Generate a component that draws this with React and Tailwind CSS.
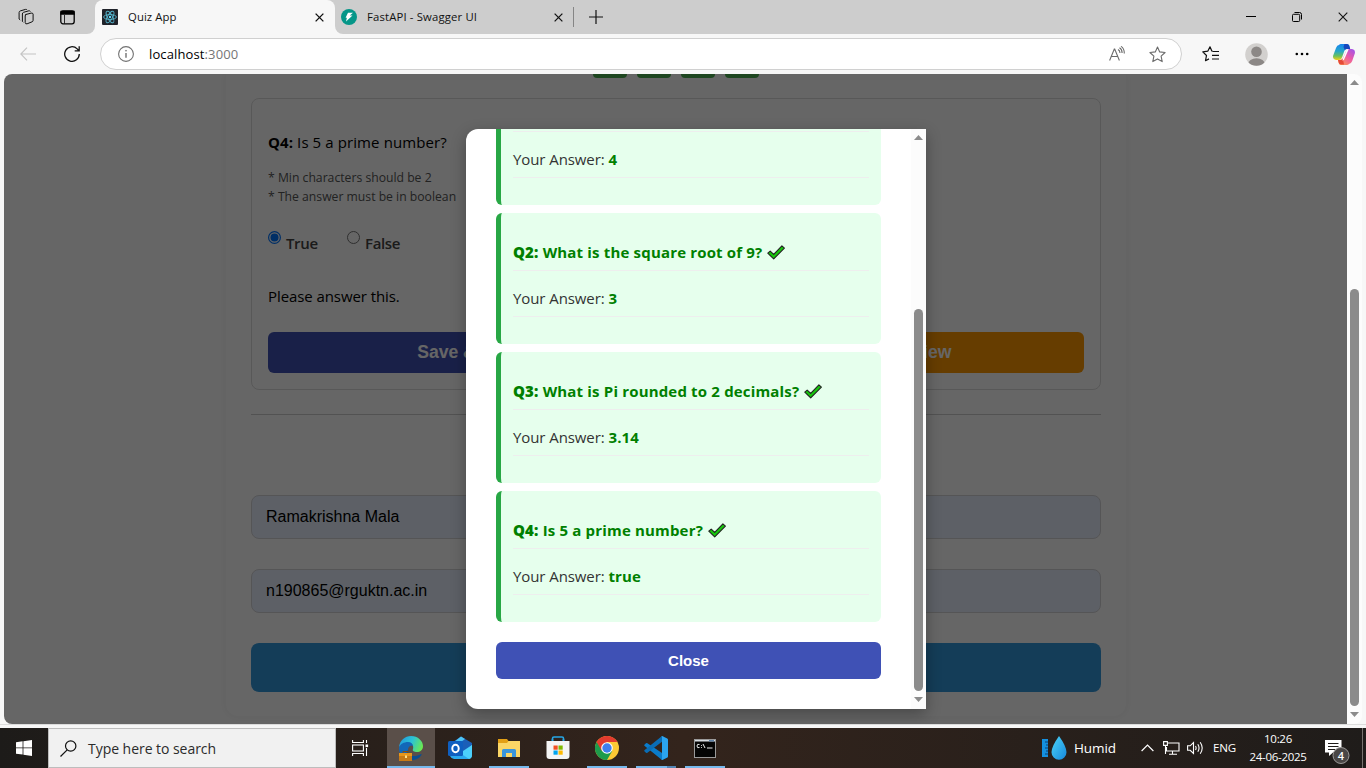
import React from "react";

const UI = "font-['Open_Sans','Noto_Sans',sans-serif]";
const ARIAL = "font-['Liberation_Sans',Arial,sans-serif]";

function CloseX({ size = 10, width = 1.4 }) {
  return (
    <svg width={size} height={size} viewBox="0 0 10 10" stroke="#111" strokeWidth={width} fill="none">
      <path d="M.7.7l8.6 8.6M9.3.7L.7 9.3" />
    </svg>
  );
}

function ReactBadge() {
  return (
    <svg width="16" height="16" viewBox="0 0 16 16">
      <rect width="16" height="16" rx="1" fill="#20232a" />
      <g fill="none" stroke="#55b4cb" strokeWidth=".9">
        <ellipse cx="8" cy="8" rx="6.4" ry="2.5" />
        <ellipse cx="8" cy="8" rx="6.4" ry="2.5" transform="rotate(60 8 8)" />
        <ellipse cx="8" cy="8" rx="6.4" ry="2.5" transform="rotate(120 8 8)" />
      </g>
      <circle cx="8" cy="8" r="1.2" fill="#61dafb" />
    </svg>
  );
}

function TabStrip() {
  return (
    <div className="flex h-[34px] items-stretch bg-[#f7f7f7] text-[11.3px] text-[#111]">
      <div className="flex w-[95px] items-center rounded-br-lg bg-[#cdcdcd] pl-[17px]">
        <svg width="18" height="18" viewBox="0 0 18 18" fill="none" stroke="#111" strokeWidth="1">
          <path d="M8.500 6.600l5.600-1.500q1.700-.4 2 1v6.200q0 1.200-1 1.500l-5 2q-1.700.5-1.900-1.200V8q0-1.100 1-1.500z" />
          <path d="M6.300 14.200l-.9-.8V6q0-1.300 1.200-1.700l5.300-1.500q1-.2 1.500.7M3.200 12l-1.100-1V4.500q0-1.200 1.200-1.600L8.500 1.400q1-.2 1.600.5" />
        </svg>
        <svg className="ml-[25px]" width="15" height="15" viewBox="0 0 15 15" fill="none" stroke="#000" strokeWidth="1.300">
          <rect x=".8" y=".8" width="13.400" height="13" rx="2.200" />
          <path d="M1 1.500h13v2.500H1z" fill="#000" />
          <path d="M4.500 5v8.500" strokeWidth=".8" />
        </svg>
      </div>
      <div className="flex w-[240px] bg-[#cdcdcd]">
        <div className="flex flex-1 items-center rounded-t-lg bg-[#f7f7f7] pl-[7px]">
          <ReactBadge />
          <span className="ml-[10px] flex-1 tracking-[0.1px]">Quiz App</span>
          <span className="mr-[11px]"><CloseX size={9} width={1.5} /></span>
        </div>
      </div>
      <div className="flex flex-1 items-stretch rounded-bl-lg bg-[#cdcdcd]">
        <div className="flex w-[238px] items-center pl-[6px]">
          <svg width="16" height="16" viewBox="0 0 16 16">
            <circle cx="8" cy="8" r="8" fill="#059688" />
            <path d="M7 3.700h5L8.800 6.600h2.700L5 12.400l.9-3.700H4.600z" fill="#fff" />
          </svg>
          <span className="ml-[10px] flex-1 tracking-[0.16px]">FastAPI - Swagger UI</span>
          <span className="mr-[10px]"><CloseX size={9} width={1.4} /></span>
        </div>
        <div className="my-[7px] w-px bg-[#858585]" />
        <div className="flex flex-1 items-center pl-[15px]">
          <svg width="14" height="14" viewBox="0 0 14 14" stroke="#111" strokeWidth="1.200"><path d="M7 0v14M0 7h14" /></svg>
        </div>
        <div className="flex items-center pr-[18px]">
          <svg width="10" height="10" viewBox="0 0 10 10" stroke="#000"><path d="M0 4.500h10" /></svg>
          <svg className="ml-[36px]" width="10" height="10" viewBox="0 0 10 10" fill="none" stroke="#000">
            <rect x=".5" y="2.300" width="7.200" height="7.200" rx="1" />
            <path d="M2.500.5h5q2 0 2 2v5" />
          </svg>
          <span className="ml-[36px]"><CloseX size={10} width={1.1} /></span>
        </div>
      </div>
    </div>
  );
}

function CopilotMark() {
  return (
    <svg width="22" height="21" viewBox="0 0 22 21">
      <defs>
        <linearGradient id="cpA" x1="0" y1="0" x2="0" y2="1"><stop stopColor="#1683ee" /><stop offset=".45" stopColor="#26a7c9" /><stop offset=".75" stopColor="#6ac15c" /><stop offset="1" stopColor="#f5cf19" /></linearGradient>
        <linearGradient id="cpB" x1="1" y1="0" x2=".2" y2="1"><stop stopColor="#9a52f2" /><stop offset=".5" stopColor="#ec5aa5" /><stop offset="1" stopColor="#ff9a55" /></linearGradient>
      </defs>
      <path d="M6 1q.5-1 2-1h6q1.600 0 2.200 1.600L17 5h-3q-2 0-2.700 2L9 13.500Q8.200 16 6 16H3Q-.8 15.500.2 11.500L3 4Q4 1 6 1z" fill="url(#cpA)" />
      <path d="M11.500 0H14q1.600 0 2.200 1.600L17.200 5H14q-1.500 0-2.200 1L10.500 3z" fill="#1647bd" />
      <path d="M16 20q-.7 1-2.200 1H8q-1.600 0-2.200-1.800L5 16h2.500q2 0 2.700-2.200L13 7.200Q13.700 5 16 5h3q3.600.6 2.800 4.500L19.200 17Q18.200 19.700 16 20z" fill="url(#cpB)" />
      <path d="M5 16h2.500q1.600-.2 2.300-1.500L11 20.500H8q-1.600 0-2.200-1.500z" fill="#e54a38" />
      <path d="M13.700 5.300h2L11 15.700q-.5.800-1.700.8z" fill="#fff" />
    </svg>
  );
}

function Toolbar() {
  return (
    <div className="flex h-10 items-center bg-[#f7f7f7]">
      <svg className="ml-5" width="16" height="14" viewBox="0 0 16 14" fill="none" stroke="#c3c3c3" strokeWidth="1.100"><path d="M16 7H.8M7 .7L.8 7 7 13.300" /></svg>
      <svg className="ml-[28px]" width="16" height="16" viewBox="0 0 16 16" fill="none" stroke="#111" strokeWidth="1.300"><path d="M15.300 8A7.300 7.300 0 1 1 13.200 2.900L15 4.700M15.200.3v4.500h-4.500" /></svg>
      <div className="ml-5 flex h-8 w-[1082px] items-center rounded-full border border-[#d0d0d0] bg-white pl-[17px]">
        <svg width="16" height="16" viewBox="0 0 16 16" fill="none" stroke="#717171" strokeWidth="1.100"><circle cx="8" cy="8" r="7.400" /><path d="M8 7v4.700" strokeWidth="1.400" /><circle cx="8" cy="4.700" r=".5" fill="#717171" strokeWidth=".7" /></svg>
        <span className="ml-[15px] flex-1 pt-px text-[13px] tracking-[0.12px] text-black">localhost<span className="text-[#767676]">:3000</span></span>
        <svg width="16" height="16" viewBox="0 0 16 16" fill="none" stroke="#6b6b6b" strokeWidth="1.100"><path d="M.6 14.500L5.300 3h.4l4.700 11.500M2.200 10.500h6.600M9 3.500q2 1 2 3.500M10.500 1.800q2.600 1.500 2.600 5.200M12 .4q3.300 2 3.300 7" /></svg>
        <svg className="ml-[24px] mr-[15px]" width="17" height="17" viewBox="0 0 17 17" fill="none" stroke="#6b6b6b" strokeWidth="1.100" strokeLinejoin="round"><path d="M8.500 1l2.200 4.900 5.400.6-4 3.700 1.100 5.400-4.700-2.700-4.700 2.700 1.100-5.400-4-3.700 5.400-.6z" /></svg>
      </div>
      <svg className="ml-[20px]" width="18" height="16" viewBox="0 0 18 16" fill="none" stroke="#111" strokeWidth="1.200" strokeLinejoin="round"><path d="M10.800 5.300L9.800 5 8 .8 5.900 5.100.8 5.800l3.700 3.700-1 5.200L7 12.900M10.800 5.500H17M10 9.300h7M10 13h7" /></svg>
      <svg className="ml-[25px]" width="23" height="23" viewBox="0 0 23 23"><defs><clipPath id="ava"><circle cx="11.500" cy="11.500" r="11.300" /></clipPath></defs><circle cx="11.500" cy="11.500" r="11.300" fill="#d2d0ce" /><circle cx="11.500" cy="8.700" r="5.300" fill="#8c8886" /><ellipse cx="11.500" cy="21.500" rx="8.500" ry="6.300" fill="#8c8886" clipPath="url(#ava)" /></svg>
      <svg className="ml-[27px]" width="14" height="4" viewBox="0 0 14 4"><circle cx="1.800" cy="2" r="1.300" /><circle cx="7" cy="2" r="1.300" /><circle cx="12.200" cy="2" r="1.300" /></svg>
      <span className="ml-[24px]"><CopilotMark /></span>
    </div>
  );
}

function ScrollBar({ spacer, thumb, className }) {
  return (
    <div className={"flex w-[15px] shrink-0 flex-col items-center bg-[#fcfcfc] " + className}>
      <svg width="9" height="5" viewBox="0 0 9 5"><path d="M4.500 0L9 5H0z" fill="#8b8b8b" /></svg>
      <div className={spacer} />
      <div className={"w-[9px] rounded-full bg-[#8b8b8b] " + thumb} />
      <svg className="mt-[6px]" width="9" height="5" viewBox="0 0 9 5"><path d="M0 0h9L4.500 5z" fill="#8b8b8b" /></svg>
    </div>
  );
}

function QuizPage() {
  return (
    <div className="flex flex-1 justify-center bg-white">
      <div className="ml-px h-[642px] w-[900px] rounded-b-xl bg-white px-[25px] shadow-[0_0_10px_rgba(0,0,0,0.06)]">
        <div className="flex h-1 justify-center gap-[10px]">
          {[1, 2, 3, 4].map((n) => (
            <div key={n} className="h-1 w-[34px] rounded-b-md bg-[#4caf50]" />
          ))}
        </div>
        <div className="mt-5 h-[292px] rounded-lg border border-[#ddd] px-4 pt-[31px]">
          <p className="h-6 text-[15px] leading-6 tracking-[0.1px] text-black"><b>Q4:</b> Is 5 a prime number?</p>
          <div className="mt-[14px] text-[12.200px] leading-[19px] text-[#555]">
            <p>* Min characters should be 2</p>
            <p>* The answer must be in boolean</p>
          </div>
          <div className="mt-[23px] flex h-6 text-[15px] font-semibold leading-6 tracking-[-0.35px] text-[#444]">
            <svg className="mr-[5px] mt-[2px]" width="13" height="13" viewBox="0 0 13 13"><circle cx="6.500" cy="6.500" r="5.900" fill="#fff" stroke="#0075ff" strokeWidth="1.200" /><circle cx="6.500" cy="6.500" r="4" fill="#0075ff" /></svg>
            <span className="mt-[2px] w-[61px]">True</span>
            <svg className="mr-[5px] mt-[2px]" width="13" height="13" viewBox="0 0 13 13"><circle cx="6.500" cy="6.500" r="6" fill="#fff" stroke="#767676" /></svg>
            <span className="mt-[2px]">False</span>
          </div>
          <p className="mt-[31px] h-6 text-[15px] leading-6 tracking-[-0.08px] text-black">Please answer this.</p>
          <div className={"mt-[24px] flex h-[41px] gap-4 text-center text-[17.600px] font-bold leading-[40px] text-white " + ARIAL}>
            <div className="flex-1 rounded-md bg-[#3f51b5]">Save &amp; Next</div>
            <div className="flex-1 rounded-md bg-[#ff9800]">Mark for Review</div>
          </div>
        </div>
        <div className="mt-6 h-px bg-[#ccc]" />
        <div className={"mt-20 flex flex-col gap-[30px] text-[16px] text-black " + ARIAL}>
          <div className="h-11 rounded-lg border border-[#d4d4d8] bg-[#e8f0fe] px-[14px] leading-[42px]">Ramakrishna Mala</div>
          <div className="h-11 rounded-lg border border-[#d4d4d8] bg-[#e8f0fe] px-[14px] leading-[42px]">n190865@rguktn.ac.in</div>
          <div className="h-[49px] rounded-lg bg-[#3498db]" />
        </div>
      </div>
    </div>
  );
}

function Check() {
  return (
    <svg className="ml-[5px]" width="18" height="15" viewBox="0 0 18 15">
      <path d="M.8 8.200l2.400-2.100L6.700 9.300 14.900.8l2.500 2.300L6.700 13.900z" fill="#16c60c" stroke="#222" strokeWidth="1.100" strokeLinejoin="round" />
    </svg>
  );
}

function Answer({ value }) {
  return (
    <div className="h-[46px] border-b border-[#eee] pt-[15px] leading-6 tracking-[-0.08px] text-[#333]">
      Your Answer: <b className="tracking-[0.1px] text-[#008000]">{value}</b>
    </div>
  );
}

const results = [
  { id: "Q2:", text: "What is the square root of 9?", answer: "3" },
  { id: "Q3:", text: "What is Pi rounded to 2 decimals?", answer: "3.14" },
  { id: "Q4:", text: "Is 5 a prime number?", answer: "true" },
];

function ResultsModal() {
  return (
    <div className="flex h-[580px] w-[460px] overflow-hidden rounded-l-xl bg-white shadow-[0_5px_15px_rgba(0,0,0,0.3)]">
      <div className="flex flex-1 flex-col pl-[30px] pr-[30px] text-[15px]">
        <div className="h-[76px] rounded-b-md border-l-[5px] border-[#28a745] bg-[#e6ffed] px-3 pt-[2px]">
          <div className="h-px bg-[#eee]" />
          <Answer value="4" />
        </div>
        {results.map((r) => (
          <div key={r.id} className="mt-2 h-[131px] rounded-md border-l-[5px] border-[#28a745] bg-[#e6ffed] p-3">
            <div className="flex h-[46px] items-start border-b border-[#eee] pt-[15px] font-bold leading-6 text-[#008000]">
              <span className="whitespace-pre tracking-[0.17px]"><span className="font-extrabold">{r.id}</span> {r.text}</span>
              <span className="flex pt-[5px]"><Check /></span>
            </div>
            <Answer value={r.answer} />
          </div>
        ))}
        <div className={"mt-5 h-[37px] rounded-md bg-[#3f51b5] text-center text-[15px] font-bold leading-[37px] text-white " + ARIAL}>Close</div>
      </div>
      <ScrollBar className="pt-[6px]" spacer="h-[169px]" thumb="h-[382px]" />
    </div>
  );
}

function EdgeIcon() {
  return (
    <svg width="26" height="26" viewBox="0 0 26 26">
      <defs><linearGradient id="edg" x1="0" y1=".3" x2="1" y2=".6"><stop stopColor="#219bdd" /><stop offset=".5" stopColor="#2cc3d5" /><stop offset="1" stopColor="#6bea4f" /></linearGradient></defs>
      <path d="M1 12C2 5 7 1 13 1c7 0 12 5 12 10 0 4-3 6-6 6-3 0-5-1-4-3 1-3-1-6-5-6-4 0-7 2-9 4z" fill="url(#edg)" />
      <path d="M1 13c1-4 5-6 9-6 3 0 5 2 5 4-3-1-5 1-5 4 0 5 5 8 11 6-2 3-5 4-8 4C6 25 1 20 1 13z" fill="#1267b8" />
      <path d="M10 15c0 6 6 8 13 4 0 0 1 0 .5 1C21 24 17 25 14 25c-5-2-7-6-4-10z" fill="#0b4f91" />
      <path d="M1 18h13v8H1z" fill="#c77a16" /><path d="M1 18h13v3H1z" fill="#e7961c" /><path d="M5 18v-1.500h5V18" fill="none" stroke="#8c4c07" /><path d="M7 20.500h2V23H7z" fill="#ffe08a" />
    </svg>
  );
}

function OutlookIcon() {
  return (
    <svg width="26" height="24" viewBox="0 0 26 24">
      <path d="M6 6L14 .5 25 7v5L15 18 6 14z" fill="#1b5fb8" /><path d="M14 .5L18 3l-8 6-3-3z" fill="#4ec4f4" />
      <path d="M25 9v10q0 4-4 4H7q-3-.5-4-3h11z" fill="#2aa9ee" /><path d="M25 9v10q0 3-3 4l-9-6z" fill="#4cd0fb" />
      <rect x="1" y="5" width="15" height="15" rx="1.500" fill="#0f5fc0" /><ellipse cx="8.500" cy="12.500" rx="3.200" ry="3.800" fill="none" stroke="#fff" strokeWidth="2" />
    </svg>
  );
}

function ExplorerIcon() {
  return (
    <svg width="22" height="19" viewBox="0 0 22 19">
      <path d="M0 0h9l1.500 2H22v4H0z" fill="#e3a016" /><path d="M0 4h9l1.500-2H22v16H0z" fill="#fbd666" />
      <path d="M4 18v-6.500Q4 10 5.500 10h11q1.500 0 1.500 1.500V18h-4v-4H8v4z" fill="#3a95dc" />
    </svg>
  );
}

function StoreIcon() {
  return (
    <svg width="24" height="24" viewBox="0 0 24 24">
      <path d="M6.500 7V2.500Q6.500 1 8 1h8q1.500 0 1.500 1.500V7" fill="none" stroke="#26a7e6" strokeWidth="1.600" />
      <path d="M.5 5h23v15q0 3-3 3h-17q-3 0-3-3z" fill="#f4f4f4" />
      <path d="M6.500 5V3M17.500 5V3" stroke="#26a7e6" strokeWidth="1.600" />
      <path d="M7.500 9.500h4.200v4.200H7.500z" fill="#f25022" /><path d="M12.500 9.500h4.200v4.200h-4.200z" fill="#7fba00" /><path d="M7.500 14.500h4.200v4.200H7.500z" fill="#00a4ef" /><path d="M12.500 14.500h4.200v4.200h-4.200z" fill="#ffb900" />
    </svg>
  );
}

function ChromeIcon() {
  return (
    <svg width="24" height="24" viewBox="0 0 24 24">
      <circle cx="12" cy="12" r="12" fill="#fcc934" />
      <path d="M12 12L1.600 6A12 12 0 0 0 12 24l5.200-9z" fill="#1e9b4b" />
      <path d="M1.600 6A12 12 0 0 1 22.400 6H12l-5.200 9z" fill="#e33b2e" />
      <circle cx="12" cy="12" r="5.800" fill="#fff" /><circle cx="12" cy="12" r="4.700" fill="#3f7fee" />
    </svg>
  );
}

function CodeIcon() {
  return (
    <svg width="24" height="24" viewBox="0 0 24 24">
      <path d="M.4 8.800L2 7.200q.7-.5 1.400 0L24 21l-6 3L.4 9.700q-.4-.5 0-.9z" fill="#0a7ccb" />
      <path d="M.4 15.200L2 16.800q.7.500 1.400 0L18 5.800V0L.4 14.300q-.4.500 0 .9z" fill="#0a6db5" />
      <path d="M17 0q.6-.2 1.200.1l5 2.400q.8.400.8 1.200v16.600q0 .8-.8 1.200l-5 2.400q-.6.300-1.200.1 1 0 1-1V1q0-1-1-1z" fill="#2ba5f0" />
    </svg>
  );
}

function CmdIcon() {
  return (
    <svg width="22" height="19" viewBox="0 0 22 19">
      <rect x=".5" y=".5" width="21" height="18" fill="#050505" stroke="#9a9a9a" /><path d="M1 1h20v1.500H1z" fill="#d8dde2" /><path d="M15 1h5v1.500h-5z" fill="#5f81a5" />
      <path d="M5.500 5.500Q3 4.500 3 7t2.500 1.500M7.500 6v.8M7.500 8v.8M9 5l2 4M13 9h5.500" stroke="#eee" fill="none" />
    </svg>
  );
}

function TaskItem({ width, active, bar, children }) {
  return (
    <div className={"flex h-10 flex-col items-center " + width + (active ? " bg-[#5a4f49]" : "")}>
      <div className="flex h-[38px] items-center pt-[2px]">{children}</div>
      <div className={"h-[2px] " + (bar || "")} />
    </div>
  );
}

function Taskbar() {
  return (
    <div className="flex h-10 items-center bg-linear-to-r from-[#1d1b19] via-[#33241c] to-[#1f1c1a] text-white">
      <div className="flex w-12 justify-center">
        <svg width="16" height="16" viewBox="0 0 16 16" fill="#fff"><path d="M0 2.200L6.600 1.300v6.200H0zM7.400 1.200L16 0v7.500H7.400zM0 8.300h6.600v6.300L0 13.700zM7.400 8.300H16V16l-8.600-1.200z" /></svg>
      </div>
      <div className="flex h-10 w-72 items-center border border-[#bdbdbd] bg-[#f1f1f1] pl-[11px]">
        <svg width="17" height="17" viewBox="0 0 17 17" fill="none" stroke="#111" strokeWidth="1.200"><circle cx="10.700" cy="6" r="5.200" /><path d="M7.200 9.800L.5 16.500" /></svg>
        <span className="ml-[11px] text-[14px] tracking-[-0.04px] text-[#2b2b2b]">Type here to search</span>
      </div>
      <TaskItem width="w-[51px] pr-[3px]">
        <svg width="17" height="16" viewBox="0 0 17 16" fill="none" stroke="#fff" strokeWidth="1.100"><path d="M.6 0v2.500h10.800V0M.6 16v-2.500h10.800V16" /><rect x=".6" y="5" width="10.800" height="6" /><path d="M14.500 0v3M14.500 8v8" /><path d="M13.500 4.500h2.600v2.600h-2.600z" fill="#fff" stroke="none" /></svg>
      </TaskItem>
      <TaskItem width="w-12" active bar="w-12 bg-[#76b9ed]"><EdgeIcon /></TaskItem>
      <TaskItem width="w-[49px]"><OutlookIcon /></TaskItem>
      <TaskItem width="w-[49px]" bar="w-10 bg-[#76b9ed]"><ExplorerIcon /></TaskItem>
      <TaskItem width="w-[49px]"><StoreIcon /></TaskItem>
      <TaskItem width="w-[49px]" bar="w-10 bg-[#76b9ed]"><ChromeIcon /></TaskItem>
      <TaskItem width="w-[49px]" bar="w-10 border-r-[9px] border-[#5386b5] bg-[#76b9ed]"><CodeIcon /></TaskItem>
      <TaskItem width="w-[49px]" bar="w-10 bg-[#76b9ed]"><CmdIcon /></TaskItem>
      <div className="flex flex-1 items-center justify-end">
        <svg width="26" height="24" viewBox="0 0 26 24">
          <defs><linearGradient id="drp" x1="0" y1="0" x2="1" y2="1"><stop stopColor="#4dd5f7" /><stop offset="1" stopColor="#1688dc" /></linearGradient></defs>
          <rect x="0" y="3" width="6" height="18" fill="#1490df" /><path d="M3 6h3M4 9h2M3 12h3M4 15h2M3 18h3" stroke="#0a3f78" strokeWidth="1.200" />
          <path d="M17 0q7.500 10.500 7.500 16.300a7.500 7.500 0 0 1-15 0Q9.500 10.500 17 0z" fill="url(#drp)" />
        </svg>
        <span className="ml-[6px] w-[67px] text-[13.500px] tracking-[-0.1px]">Humid</span>
        <svg width="13" height="8" viewBox="0 0 13 8" fill="none" stroke="#fff" strokeWidth="1.200"><path d="M.6 7l5.900-6 5.900 6" /></svg>
        <svg className="ml-[9px]" width="17" height="14" viewBox="0 0 17 14" fill="none" stroke="#fff" strokeWidth="1.100"><path d="M5 2h11v8H3.500V6M9.500 10v3M6 13.300h8M.6.600h3.800v3.800H.6zM2.500 4.500v8.500" /></svg>
        <svg className="ml-[7px]" width="17" height="14" viewBox="0 0 17 14" fill="none" stroke="#fff" strokeWidth="1.100"><path d="M.6 4.800h2.600L6.500 1.500v11L3.200 9.300H.6zM8.500 5q1.200 2 0 4M10.800 3.200q2.500 3.800 0 7.600M13.200 1.200q4 5.800 0 11.600" /></svg>
        <span className="ml-[9px] w-[35px] text-[11.600px] tracking-[-0.2px]">ENG</span>
        <div className="w-[60px] text-center text-[11.500px] leading-[18px] tracking-[-0.3px]"><p>10:26</p><p className="whitespace-nowrap">24-06-2025</p></div>
        <svg className="ml-[17px] mr-[12px] mt-[10px]" width="25" height="26" viewBox="0 0 25 26">
          <path d="M0 0h16.500v12.500H8L4 16v-3.500H0z" fill="#fff" /><path d="M3 3.500h10.500M3 6.500h10.500M3 9.500h7" stroke="#1f1c1a" />
          <circle cx="16" cy="15.500" r="8" fill="#4a4746" stroke="#9d9b9a" />
          <text x="16" y="19.500" textAnchor="middle" fontFamily="Open Sans" fontSize="11" fontWeight="600" fill="#fff">4</text>
        </svg>
        <div className="mr-[3px] h-10 w-px bg-[#77726f]" />
      </div>
    </div>
  );
}

export default function App() {
  return (
    <div className={"flex h-[768px] w-[1366px] flex-col overflow-hidden bg-[#f7f7f7] " + UI}>
      <TabStrip />
      <Toolbar />
      <div className="relative mx-1 flex h-[650px] overflow-hidden rounded-lg">
        <QuizPage />
        <ScrollBar className="pt-[6px]" spacer="h-[204px]" thumb="h-[417px]" />
        <div className="absolute inset-y-0 left-0 flex w-[1343px] justify-center bg-black/60 pl-[41px] pt-[55px]">
          <ResultsModal />
        </div>
      </div>
      <div className="h-1 border-t border-[#dcdcdc] bg-[#f7f7f7]" />
      <Taskbar />
    </div>
  );
}
